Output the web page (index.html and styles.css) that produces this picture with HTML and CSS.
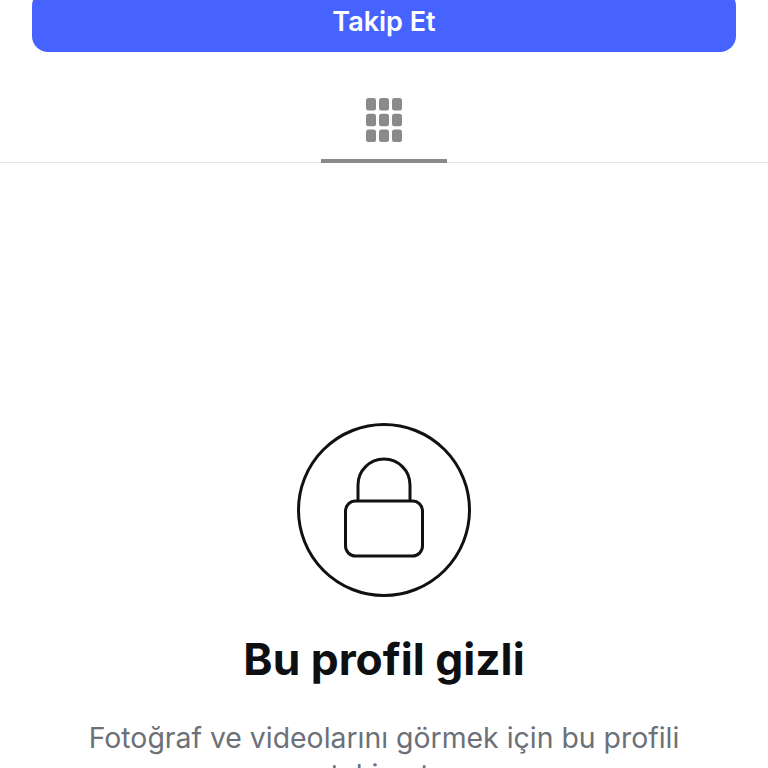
FILE: index.html
```html
<!DOCTYPE html>
<html lang="tr">
<head>
  <meta charset="UTF-8" />
  <meta name="viewport" content="width=device-width, initial-scale=1.0"/>
  <title>Bu profil gizli</title>
  <link rel="stylesheet" href="styles.css">
</head>
<body>
  <div class="page">
    <div class="actions">
      <button class="follow-btn">Takip Et</button>
    </div>

    <div class="tabs">
      <div class="tab">
        <svg class="grid-icon" width="36" height="44" viewBox="0 0 36 44">
          <rect x="0" y="0" width="10" height="12.5" rx="2.5"/>
          <rect x="13" y="0" width="10" height="12.5" rx="2.5"/>
          <rect x="26" y="0" width="10" height="12.5" rx="2.5"/>
          <rect x="0" y="15.75" width="10" height="12.5" rx="2.5"/>
          <rect x="13" y="15.75" width="10" height="12.5" rx="2.5"/>
          <rect x="26" y="15.75" width="10" height="12.5" rx="2.5"/>
          <rect x="0" y="31.5" width="10" height="12.5" rx="2.5"/>
          <rect x="13" y="31.5" width="10" height="12.5" rx="2.5"/>
          <rect x="26" y="31.5" width="10" height="12.5" rx="2.5"/>
        </svg>
      </div>
    </div>

    <div class="private">
      <svg class="lock-icon" width="174" height="174" viewBox="0 0 174 174">
        <circle cx="87" cy="87" r="85.5"/>
        <path d="M61 78V62a26 26 0 0 1 52 0V78"/>
        <rect x="48.5" y="78" width="77" height="55" rx="10"/>
      </svg>
      <h1 class="private-title">Bu profil gizli</h1>
      <p class="private-text">Fotoğraf ve videolarını görmek için bu profili takip et&nbsp;</p>
    </div>
  </div>
</body>
</html>
```

FILE: styles.css
```css
* { box-sizing: border-box; margin: 0; padding: 0; }

html, body {
  height: 100%;
  background: #fff;
  overflow: hidden;
  font-family: Inter, "Noto Sans", sans-serif;
}

.page {
  height: 768px;
  overflow: hidden;
}

.actions {
  margin-top: -10px;
  padding: 0 32px;
}

.follow-btn {
  display: block;
  width: 100%;
  height: 62px;
  background: #4763ff;
  color: #fff;
  border: none;
  border-radius: 16px;
  font-family: inherit;
  font-size: 27px;
  font-weight: 600;
}

.tabs {
  display: flex;
  justify-content: center;
  height: 111px;
  border-bottom: 1px solid #e4e4e4;
}

.tab {
  width: 126px;
  height: 111px;
  padding-top: 46px;
  display: flex;
  justify-content: center;
  align-items: flex-start;
  border-bottom: 4px solid #8a8a8a;
}

.grid-icon {
  fill: #8a8a8a;
}

.private {
  display: flex;
  flex-direction: column;
  align-items: center;
  padding: 260px 80px 0;
  text-align: center;
}

.lock-icon {
  fill: none;
  stroke: #111;
  stroke-width: 3;
  flex: none;
}

.private-title {
  margin-top: 31px;
  font-size: 44.3px;
  font-weight: 700;
  line-height: 62px;
  color: #0d0f12;
}

.private-text {
  margin-top: 29px;
  font-size: 28.4px;
  line-height: 37px;
  color: #6c7078;
}
```
